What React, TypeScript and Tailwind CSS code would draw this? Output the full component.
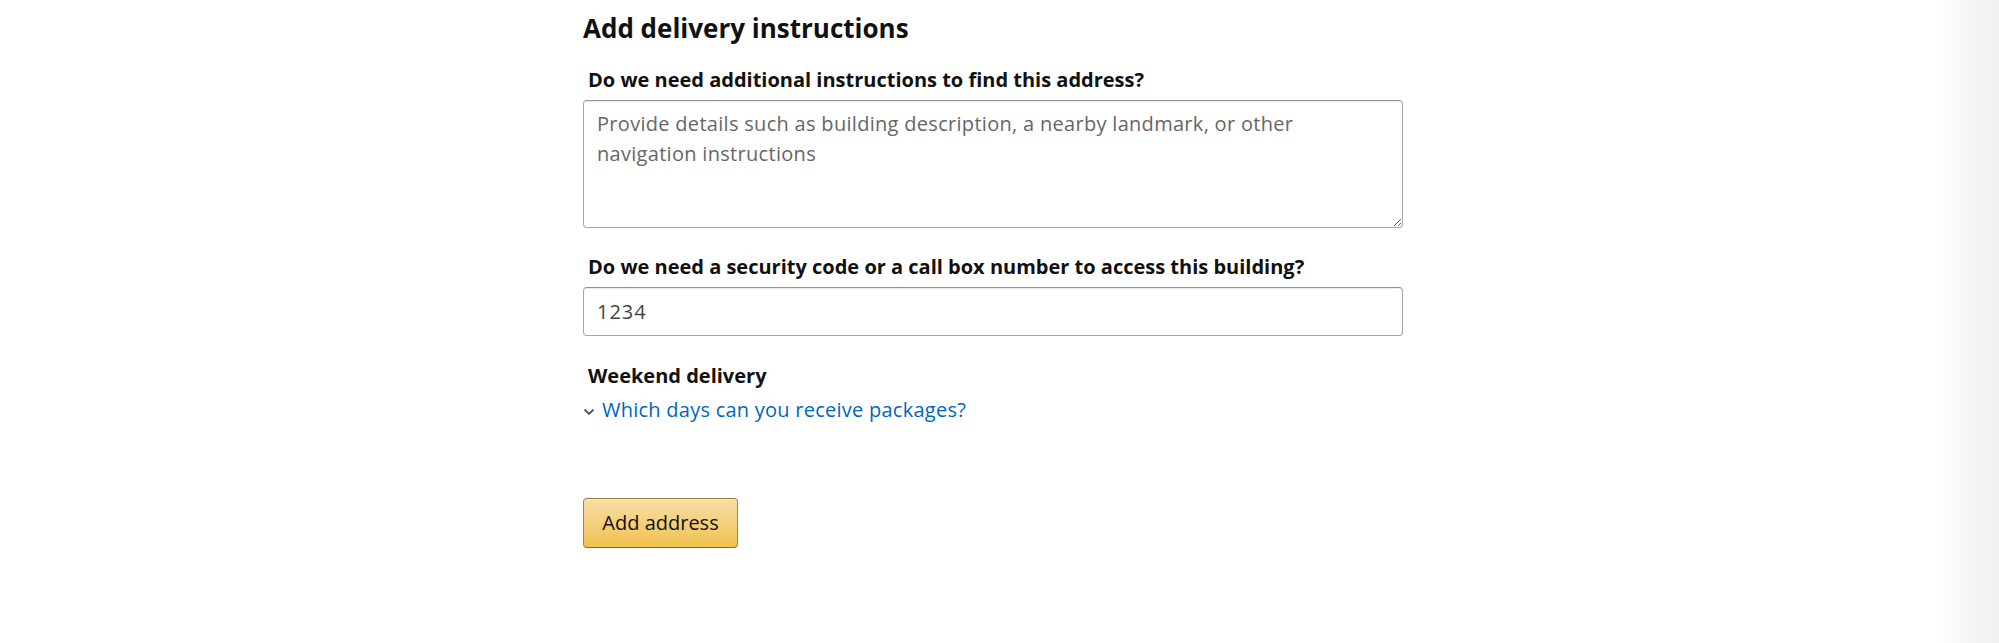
export default function App() {
  return (
    <div className="flex min-h-[643px] w-full bg-white font-['Open_Sans',sans-serif] text-[#111]">
      {/* Form column */}
      <div className="flex-1 pl-[583px]">
        <div className="flex w-[820px] flex-col">
          <h2 className="pt-[12px] text-[26px] font-bold leading-[32px]">Add delivery instructions</h2>

          <label className="mt-[24px] pl-[5px] text-[20px] font-bold leading-[24px]">
            Do we need additional instructions to find this address?
          </label>
          <textarea
            className="mt-[8px] h-[128px] w-full resize-y rounded-[4px] border border-[#a6a6a6] border-t-[#949494] px-[13px] pt-[8px] text-[20px] leading-[30px] tracking-[0.3px] text-[#333] shadow-[0_1px_0_rgba(0,0,0,0.07)_inset] outline-none placeholder:text-[#666]"
            placeholder="Provide details such as building description, a nearby landmark, or other navigation instructions"
          />

          <label className="mt-[27px] pl-[5px] text-[20px] font-bold leading-[24px]">
            Do we need a security code or a call box number to access this building?
          </label>
          <input
            className="mt-[8px] h-[49px] w-full rounded-[4px] border border-[#a6a6a6] border-t-[#949494] px-[13px] text-[20px] tracking-[1px] text-[#444] shadow-[0_1px_0_rgba(0,0,0,0.07)_inset] outline-none"
            defaultValue="1234"
          />

          <div className="mt-[28px] pl-[5px] text-[20px] font-bold leading-[24px]">Weekend delivery</div>
          <div className="mt-[10px] flex items-center gap-[7px] text-[20px] leading-[24px] tracking-[0.25px]">
            <svg width="12" height="8" viewBox="0 0 12 8" className="mt-[3px]">
              <path d="M1.5 1.5 L6 6 L10.5 1.5" fill="none" stroke="#555" strokeWidth="1.8" />
            </svg>
            <span className="text-[#0066c0]">Which days can you receive packages?</span>
          </div>

          <div className="mt-[76px]">
            <button className="h-[50px] w-[155px] rounded-[4px] border border-[#a88734] border-b-[#846a29] border-t-[#9c7e31] bg-gradient-to-b from-[#f7dfa5] to-[#f0c14b] text-[20px] leading-[48px] text-[#111] shadow-[inset_0_1px_0_rgba(255,255,255,0.4)]">
              Add address
            </button>
          </div>
        </div>
      </div>

      {/* Right edge shade */}
      <div className="w-[64px] bg-gradient-to-r from-white to-[#efefef]" />
    </div>
  )
}
